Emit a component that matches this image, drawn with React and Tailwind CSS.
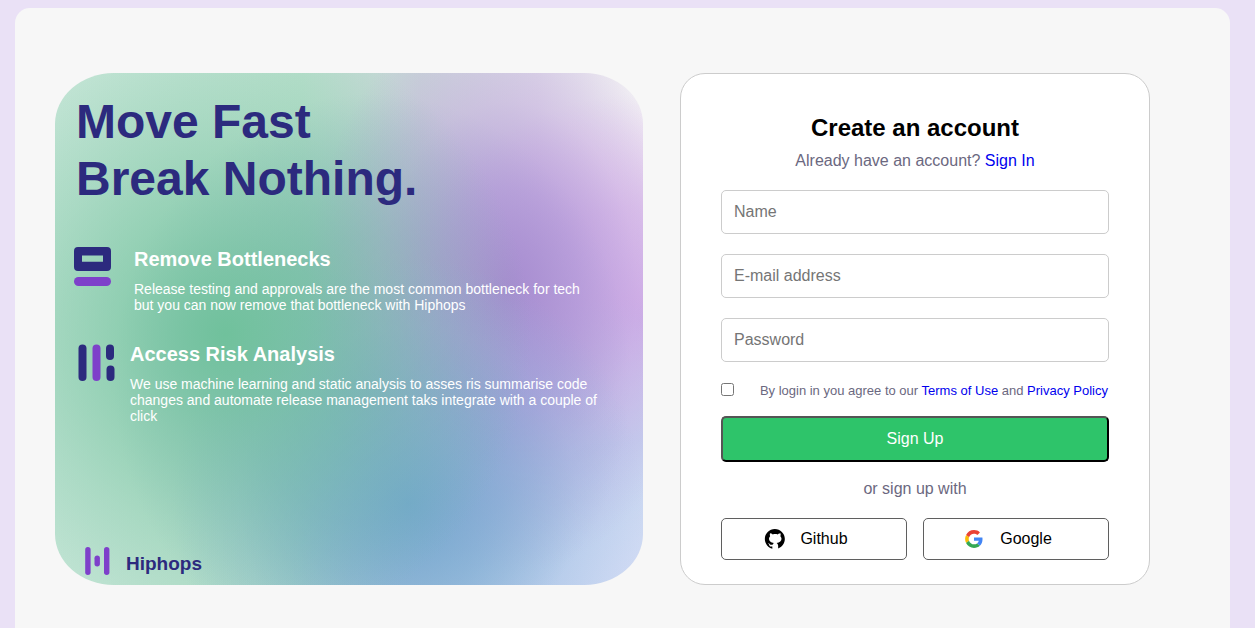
const inputClass =
  "block h-[44px] w-full rounded-[5px] border border-[#cccccc] bg-white px-3 text-base text-black placeholder:text-[#757575] outline-none focus:border-[#2d2a7f]";
const linkClass = "text-[#0000ee] hover:underline";

function StackIcon() {
  return (
    <svg className="shrink-0" width="60" height="42" viewBox="0 0 60 42" aria-hidden="true">
      <path
        fillRule="evenodd"
        fill="#2c2a7e"
        d="M4 0h29a4 4 0 0 1 4 4v16a4 4 0 0 1-4 4H4a4 4 0 0 1-4-4V4a4 4 0 0 1 4-4zM8 8.500v6.200h21V8.500z"
      />
      <rect x="0" y="30" width="37" height="9" rx="4.500" fill="#7e40ca" />
    </svg>
  );
}

function BarsIcon() {
  return (
    <svg className="shrink-0" width="56" height="42" viewBox="0 0 56 42" aria-hidden="true">
      <rect x="4.500" y="2.500" width="8" height="36.500" rx="4" fill="#2c2a7e" />
      <rect x="18.500" y="2.500" width="8" height="36.500" rx="4" fill="#7e40ca" />
      <rect x="32" y="2.500" width="8" height="15.500" rx="4" fill="#2c2a7e" />
      <rect x="32.500" y="23.500" width="8" height="15.500" rx="4" fill="#2c2a7e" />
    </svg>
  );
}

function HiphopsLogo() {
  return (
    <svg width="26" height="29" viewBox="0 0 26 29" aria-hidden="true">
      <rect x="0.200" y="0" width="5.400" height="28" rx="2.700" fill="#7e40ca" />
      <rect x="9.500" y="8.500" width="5.400" height="11" rx="2.700" fill="#7e40ca" />
      <rect x="19" y="0" width="5.400" height="28" rx="2.700" fill="#7e40ca" />
    </svg>
  );
}

function GithubIcon() {
  return (
    <svg width="20" height="20" viewBox="2 3 24 24" overflow="visible" aria-hidden="true">
      <path d="M15,3C8.373,3,3,8.373,3,15c0,5.623,3.872,10.328,9.092,11.63C12.036,26.468,12,26.28,12,26.047v-2.051c-0.487,0-1.303,0-1.508,0c-0.821,0-1.551-0.353-1.905-1.009c-0.393-0.729-0.461-1.844-1.435-2.526c-0.289-0.227-0.069-0.486,0.264-0.451c0.615,0.174,1.125,0.596,1.605,1.222c0.478,0.627,0.703,0.769,1.596,0.769c0.433,0,1.081-0.025,1.691-0.121c0.328-0.833,0.895-1.6,1.588-1.962c-3.996-0.411-5.903-2.399-5.903-5.098c0-1.162,0.495-2.286,1.336-3.233C9.053,10.647,8.706,8.73,9.435,8c1.798,0,2.885,1.166,3.146,1.481C13.477,9.174,14.461,9,15.495,9c1.036,0,2.024,0.174,2.922,0.483C18.675,9.17,19.763,8,21.565,8c0.732,0.731,0.381,2.656,0.102,3.594c0.836,0.945,1.328,2.066,1.328,3.226c0,2.697-1.904,4.684-5.894,5.097C18.199,20.49,19,22.1,19,23.313v2.734c0,0.104-0.023,0.179-0.035,0.268C23.641,24.676,27,20.236,27,15C27,8.373,21.627,3,15,3z" />
    </svg>
  );
}

function GoogleIcon() {
  return (
    <svg width="20" height="20" viewBox="-3 -3 54 54" aria-hidden="true">
      <path fill="#EA4335" d="M24 9.5c3.54 0 6.71 1.22 9.21 3.6l6.85-6.85C35.9 2.38 30.47 0 24 0 14.62 0 6.51 5.38 2.56 13.22l7.98 6.19C12.43 13.72 17.74 9.5 24 9.5z" />
      <path fill="#4285F4" d="M46.98 24.55c0-1.57-.15-3.09-.38-4.55H24v9.02h12.94c-.58 2.96-2.26 5.48-4.78 7.18l7.73 6c4.51-4.18 7.09-10.36 7.09-17.65z" />
      <path fill="#FBBC05" d="M10.53 28.59c-.48-1.45-.76-2.99-.76-4.59s.27-3.14.76-4.59l-7.98-6.19C.92 16.46 0 20.12 0 24c0 3.88.92 7.54 2.56 10.78l7.97-6.19z" />
      <path fill="#34A853" d="M24 48c6.48 0 11.93-2.13 15.89-5.81l-7.73-6c-2.15 1.45-4.92 2.3-8.16 2.3-6.26 0-11.57-4.22-13.47-9.91l-7.98 6.19C6.51 42.62 14.62 48 24 48z" />
    </svg>
  );
}

function Feature({ icon, title, textClass, children }) {
  return (
    <li className="flex items-start">
      {icon}
      <div>
        <h2 className="text-xl leading-6 font-bold">{title}</h2>
        <p className={textClass}>{children}</p>
      </div>
    </li>
  );
}

function Promo() {
  return (
    <section className="flex min-w-0 flex-1 flex-col rounded-[10%] bg-[radial-gradient(52%_60%_at_29%_51%,#70c19c_0%,#70c19c99_35%,#70c19c4d_65%,#70c19c00_100%),radial-gradient(40%_48%_at_60%_84%,#70a5cee6_0%,#74a8d28c_40%,#86b2dc40_72%,#86b2dc00_100%),radial-gradient(34%_56%_at_77%_42%,#a78cd0_0%,#ae90d6b3_35%,#bd98dc59_65%,#cfa8e400_100%),radial-gradient(44%_56%_at_54%_60%,#6a97b899_0%,#6a97b866_50%,#6a97b800_100%),radial-gradient(60%_56%_at_100%_100%,#d0daf4_0%,#bcd0eecc_50%,#bccff000_100%),radial-gradient(42%_44%_at_100%_48%,#d4b4ea_0%,#d8b6eaa6_50%,#d8b6ea00_100%),linear-gradient(90deg,#c4e5d6_0%,#b8dfcc_42%,#c8d4d8_62%,#dedde8_82%,#f6f6f6_100%)] px-[19px] pt-5">
      <h1 className="pl-0.5 text-5xl leading-[57px] font-bold text-[#2c2a7e]">
        Move Fast
        <br />
        Break Nothing.
      </h1>
      <ul className="mt-10 flex flex-col gap-[29px] text-white">
        <Feature
          icon={<StackIcon />}
          title="Remove Bottlenecks"
          textClass="mt-[10px] max-w-[460px] text-sm leading-4"
        >
          Release testing and approvals are the most common bottleneck for tech but you can now
          remove that bottleneck with Hiphops
        </Feature>
        <Feature
          icon={<BarsIcon />}
          title="Access Risk Analysis"
          textClass="mt-[10px] max-w-[472px] text-sm leading-4"
        >
          We use machine learning and static analysis to asses ris summarise code changes and
          automate release management taks integrate with a couple of click
        </Feature>
      </ul>
      <div className="mt-auto flex items-end gap-[15px] pb-[9px] pl-[11px]">
        <HiphopsLogo />
        <span className="text-[19px] leading-6 font-bold text-[#2c2a7e]">Hiphops</span>
      </div>
    </section>
  );
}

function SocialButton({ icon, label }) {
  return (
    <button
      type="button"
      className="flex h-[42px] flex-1 items-center justify-center gap-4 rounded-[5px] border border-[#5f5f5f] bg-white pr-4 text-base text-black"
    >
      {icon}
      {label}
    </button>
  );
}

function SignUpForm() {
  return (
    <form
      className="w-[470px] shrink-0 rounded-[25px] border border-[#cccccc] bg-white px-10 pt-10 pb-6 text-[#6b6880]"
      onSubmit={(e) => e.preventDefault()}
    >
      <h2 className="text-center text-2xl leading-7 font-bold text-black">Create an account</h2>
      <p className="mt-[9px] text-center text-base leading-5">
        Already have an account?{" "}
        <a href="#signin" className={linkClass}>
          Sign In
        </a>
      </p>
      <div className="mt-[19px] flex flex-col gap-5">
        <input className={inputClass} type="text" placeholder="Name" aria-label="Name" />
        <input className={inputClass} type="email" placeholder="E-mail address" aria-label="E-mail address" />
        <input className={inputClass} type="password" placeholder="Password" aria-label="Password" />
      </div>
      <div className="mt-[21px] flex items-start">
        <input id="terms" type="checkbox" className="size-[13px]" />
        <label htmlFor="terms" className="ml-auto pr-px text-[13px] leading-4">
          By login in you agree to our{" "}
          <a href="#terms-of-use" className={linkClass}>
            Terms of Use
          </a>{" "}
          and{" "}
          <a href="#privacy" className={linkClass}>
            Privacy Policy
          </a>
        </label>
      </div>
      <button
        type="submit"
        className="mt-[17px] block h-[46px] w-full rounded-[5px] border-2 border-t-[#555555] border-r-black border-b-black border-l-[#555555] bg-[#2ec46a] text-base text-white"
      >
        Sign Up
      </button>
      <p className="mt-[17px] text-center text-base leading-5">or sign up with</p>
      <div className="mt-[19px] flex gap-4">
        <SocialButton icon={<GithubIcon />} label="Github" />
        <SocialButton icon={<GoogleIcon />} label="Google" />
      </div>
    </form>
  );
}

export default function App() {
  return (
    <div className="flex min-h-screen flex-col bg-[#eae1f6] pt-2 pr-[25px] pl-[15px] font-['Liberation_Sans',Arial,sans-serif]">
      <main className="flex flex-1 items-start rounded-t-[15px] bg-[#f7f7f7] pt-[65px] pr-20 pb-10 pl-10">
        <div className="flex flex-1 items-stretch gap-[37px]">
          <Promo />
          <SignUpForm />
        </div>
      </main>
    </div>
  );
}
